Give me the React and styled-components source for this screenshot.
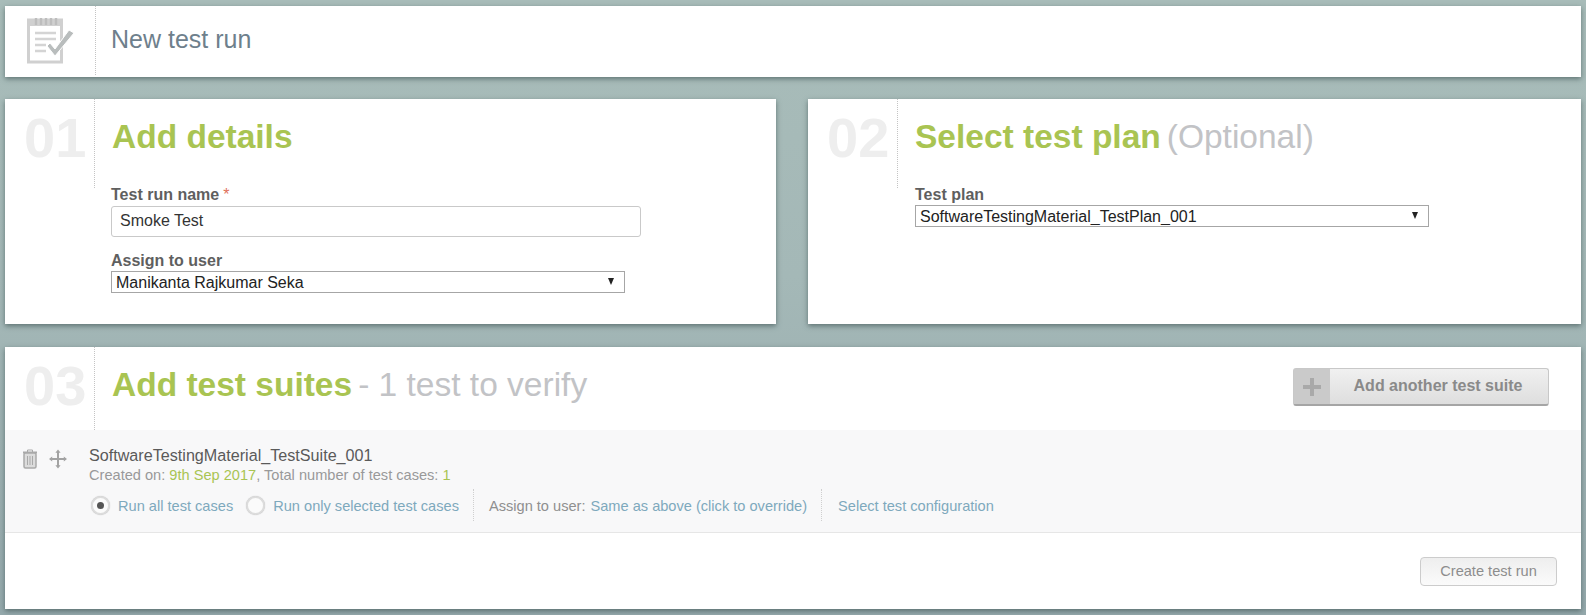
import React from "react";
import styled, { createGlobalStyle } from "styled-components";

const Global = createGlobalStyle`
  html, body { margin: 0; padding: 0; }
  body { font-family: "Liberation Sans", Arial, sans-serif; }
  * { box-sizing: border-box; }
`;

const Page = styled.div`
  width: 1586px;
  height: 615px;
  overflow: hidden;
  padding: 6px 5px 0 5px;
  background: linear-gradient(180deg, #a8bcb9 0%, #a4b8b7 45%, #95a9ac 100%);
  display: flex;
  flex-direction: column;
`;

const Panel = styled.section`
  background: #fff;
  box-shadow: 0 2px 5px rgba(50, 70, 70, 0.6);
`;

const Header = styled(Panel)`
  height: 71px;
  display: flex;
  align-items: stretch;
  flex: none;
`;

const HeaderIcon = styled.div`
  width: 91px;
  height: 69px;
  border-right: 1px dotted #c4c4c4;
  display: flex;
  align-items: center;
  padding-left: 22px;
`;

const PageTitle = styled.h1`
  margin: -4px 0 0;
  padding-left: 15px;
  align-self: center;
  font-size: 25px;
  font-weight: 400;
  color: #6e808c;
`;

const Columns = styled.div`
  margin-top: 22px;
  height: 225px;
  display: grid;
  grid-template-columns: 771px 773px;
  column-gap: 32px;
  flex: none;
`;

const StepCard = styled(Panel)`
  position: relative;
  padding: 0;
`;

const StepHead = styled.header`
  display: flex;
  align-items: flex-start;
  height: ${(p) => p.$h}px;
`;

const StepNumber = styled.div`
  width: 90px;
  height: 100%;
  border-right: 1px dotted #c4c4c4;
  padding: 6px 0 0 19px;
  font-size: 56px;
  line-height: 66px;
  font-weight: 700;
  color: #eeeeee;
  flex: none;
`;

const Title = styled.h2`
  margin: 0;
  padding: ${(p) => p.$top}px 0 0 17px;
  font-size: 33.5px;
  line-height: 38px;
  font-weight: 700;
  color: #a9c452;
  white-space: nowrap;
`;

const TitleNote = styled.span`
  font-weight: 400;
  color: #c2c3c6;
  margin-left: 6px;
`;

const Fields = styled.div`
  margin-top: -2px;
  padding-left: ${(p) => p.$left || 106}px;
  display: flex;
  flex-direction: column;
  align-items: flex-start;
`;

const Label = styled.label`
  font-size: 16px;
  line-height: 17px;
  font-weight: 700;
  color: #5f5f5f;
  display: block;
`;

const Required = styled.span`
  color: #e0705a;
  font-weight: 400;
  margin-left: 4px;
`;

const TextField = styled.input`
  display: block;
  width: 530px;
  height: 31px;
  margin: 3px 0 15px 0;
  padding: 0 8px 2px;
  border: 1px solid #c9c9c9;
  border-radius: 3px;
  font: 16px "Liberation Sans", Arial, sans-serif;
  color: #333;
  outline: none;
`;

const SelectWrap = styled.div`
  position: relative;
  width: ${(p) => p.$w}px;
  height: ${(p) => p.$h}px;
  margin-top: 2px;

  &::after {
    content: "";
    position: absolute;
    right: 11px;
    top: 7px;
    border-left: 3.5px solid transparent;
    border-right: 3.5px solid transparent;
    border-top: 7px solid #222;
    pointer-events: none;
  }
`;

const Select = styled.select`
  appearance: none;
  width: 100%;
  height: 100%;
  display: block;
  padding: 0 0 0 4px;
  border: 1px solid #a6a6a6;
  border-radius: 0;
  background: #fff;
  font: 16px "Liberation Sans", Arial, sans-serif;
  color: #222;
  outline: none;
`;

const SuitesCard = styled(Panel)`
  margin-top: 23px;
  height: 262px;
  flex: none;
  display: flex;
  flex-direction: column;
`;

const SuitesHead = styled(StepHead)`
  position: relative;
  flex: none;
`;

const AddButton = styled.button`
  position: absolute;
  left: 1288px;
  top: 21px;
  width: 256px;
  height: 38px;
  padding: 0;
  display: flex;
  align-items: stretch;
  border: 1px solid #c8c8c8;
  border-bottom: 2px solid #a5a5a5;
  border-radius: 3px;
  background: linear-gradient(180deg, #f0f0f0, #dedede);
  font: 700 16px "Liberation Sans", Arial, sans-serif;
  color: #8a8a8a;
`;

const AddIcon = styled.span`
  width: 36px;
  flex: none;
  display: flex;
  align-items: center;
  justify-content: center;
  background: #cacaca;
`;

const AddLabel = styled.span`
  flex: 1;
  align-self: center;
  text-align: center;
  margin: -2px 2px 0 0;
`;

const SuiteRow = styled.div`
  height: 103px;
  flex: none;
  display: flex;
  background: #f8f8f9;
  border-bottom: 1px solid #e6e6e6;
  padding: 19px 0 0 17px;
`;

const SuiteTools = styled.div`
  width: 67px;
  flex: none;
  display: flex;
  align-items: flex-start;
  gap: 11px;
`;

const SuiteBody = styled.div`
  display: flex;
  flex-direction: column;
`;

const SuiteName = styled.div`
  font-size: 16.15px;
  line-height: 17px;
  color: #5a5a5a;
  margin-top: -2px;
`;

const SuiteMeta = styled.div`
  font-size: 14.6px;
  line-height: 16px;
  color: #999;
  margin-top: 3px;
`;

const Accent = styled.span`
  color: #a9c452;
`;

const Options = styled.div`
  display: flex;
  align-items: center;
  margin-top: 6px;
  height: 32px;
  font-size: 14.6px;
  white-space: nowrap;
`;

const Radio = styled.span`
  width: 19px;
  height: 19px;
  margin-left: ${(p) => p.$ml}px;
  margin-right: 8px;
  border-radius: 50%;
  border: 2px solid #dcdcdc;
  background: #fbfbfb;
  box-shadow: 0 0 1px rgba(0, 0, 0, 0.25);
  display: flex;
  align-items: center;
  justify-content: center;
  flex: none;

  &::after {
    content: "";
    display: ${(p) => (p.$on ? "block" : "none")};
    width: 7px;
    height: 7px;
    border-radius: 50%;
    background: #555;
  }
`;

const OptionText = styled.span`
  padding-top: 2px;
`;

const LinkText = styled.a`
  color: #7ea9bd;
  text-decoration: none;
`;

const OptionGroup = styled.span`
  height: 100%;
  display: flex;
  align-items: center;
  border-left: 1px dotted #cfcfcf;
  margin-left: ${(p) => p.$ml}px;
  padding-left: ${(p) => p.$pl}px;
`;

const MutedText = styled.span`
  color: #8f8f8f;
  margin-right: 5px;
`;

const Footer = styled.footer`
  flex: 1;
  display: flex;
  justify-content: flex-end;
  align-items: flex-start;
  padding: 24px 24px 0 0;
`;

const CreateButton = styled.button`
  width: 137px;
  height: 29px;
  padding: 0 0 2px;
  border: 1px solid #cccccc;
  border-radius: 4px;
  background: linear-gradient(180deg, #eeeeee, #fbfbfb);
  font: 14.6px "Liberation Sans", Arial, sans-serif;
  color: #8d8d8d;
`;

const NotepadIcon = () => (
  <svg width="49" height="47" viewBox="0 0 49 47" fill="none" aria-hidden="true">
    <rect x="1.5" y="3" width="33" height="42" stroke="#d0d0d0" strokeWidth="3" fill="#fff" />
    <path d="M1 2h35v7H1z" fill="#d0d0d0" />
    <path d="M9 1v7M14 1v7M19 1v7M24 1v7M29 1v7" stroke="#bdbdbd" strokeWidth="2.4" />
    <path d="M8 16h21M8 22h21M8 28h11M8 34h11" stroke="#d4d4d4" strokeWidth="2.6" />
    <path d="M20 29l3-3 5 6L42 13l5 3-19 23z" fill="#b9bdbd" stroke="#fff" strokeWidth="1" />
  </svg>
);

const TrashIcon = () => (
  <svg width="16" height="20" viewBox="0 0 16 20" fill="none" stroke="#a9a9a9" aria-hidden="true">
    <path d="M1 3.5h14" strokeWidth="2" />
    <path d="M5.5 3V1h5v2" strokeWidth="1" />
    <rect x="2" y="4" width="12" height="15" rx="1.5" strokeWidth="1.5" fill="#dcdcdc" />
    <path d="M5.5 7v9M8 7v9M10.5 7v9" strokeWidth="1" />
  </svg>
);

const MoveIcon = () => (
  <svg width="18" height="20" viewBox="0 0 18 20" fill="#a3a3a3" aria-hidden="true">
    <path d="M8 3h2v14H8z" />
    <path d="M1.5 9h15v2h-15z" />
    <path d="M9 .5L11.6 3.8H6.4zM9 19.5l-2.6-3.3h5.2zM0 10l3.2-2.6v5.2zM18 10l-3.2-2.6v5.2z" />
  </svg>
);

const PlusIcon = () => (
  <svg width="20" height="20" viewBox="0 0 20 20" fill="#a9a9a9" aria-hidden="true">
    <path d="M8 1h4v7h7v4h-7v7H8v-7H1V8h7z" />
  </svg>
);

export default function App() {
  return (
    <Page>
      <Global />
      <Header>
        <HeaderIcon>
          <NotepadIcon />
        </HeaderIcon>
        <PageTitle>New test run</PageTitle>
      </Header>

      <Columns>
        <StepCard>
          <StepHead $h={89}>
            <StepNumber>01</StepNumber>
            <Title $top={19}>Add details</Title>
          </StepHead>
          <Fields>
            <Label>
              Test run name<Required>*</Required>
            </Label>
            <TextField defaultValue="Smoke Test" />
            <Label>Assign to user</Label>
            <SelectWrap $w={514} $h={22}>
              <Select defaultValue="m">
                <option value="m">Manikanta Rajkumar Seka</option>
              </Select>
            </SelectWrap>
          </Fields>
        </StepCard>

        <StepCard>
          <StepHead $h={89}>
            <StepNumber>02</StepNumber>
            <Title $top={19}>
              Select test plan<TitleNote>(Optional)</TitleNote>
            </Title>
          </StepHead>
          <Fields $left={107}>
            <Label>Test plan</Label>
            <SelectWrap $w={514} $h={22}>
              <Select defaultValue="p">
                <option value="p">SoftwareTestingMaterial_TestPlan_001</option>
              </Select>
            </SelectWrap>
          </Fields>
        </StepCard>
      </Columns>

      <SuitesCard>
        <SuitesHead $h={83}>
          <StepNumber>03</StepNumber>
          <Title $top={19}>
            Add test suites<TitleNote>- 1 test to verify</TitleNote>
          </Title>
          <AddButton>
            <AddIcon>
              <PlusIcon />
            </AddIcon>
            <AddLabel>Add another test suite</AddLabel>
          </AddButton>
        </SuitesHead>

        <SuiteRow>
          <SuiteTools>
            <TrashIcon />
            <MoveIcon />
          </SuiteTools>
          <SuiteBody>
            <SuiteName>SoftwareTestingMaterial_TestSuite_001</SuiteName>
            <SuiteMeta>
              Created on: <Accent>9th Sep 2017</Accent>, Total number of test cases: <Accent>1</Accent>
            </SuiteMeta>
            <Options>
              <Radio $on $ml={2} />
              <OptionText>
                <LinkText>Run all test cases</LinkText>
              </OptionText>
              <Radio $ml={13} />
              <OptionText>
                <LinkText>Run only selected test cases</LinkText>
              </OptionText>
              <OptionGroup $ml={14} $pl={15}>
                <OptionText>
                  <MutedText>Assign to user:</MutedText>
                  <LinkText>Same as above (click to override)</LinkText>
                </OptionText>
              </OptionGroup>
              <OptionGroup $ml={14} $pl={16}>
                <OptionText>
                  <LinkText>Select test configuration</LinkText>
                </OptionText>
              </OptionGroup>
            </Options>
          </SuiteBody>
        </SuiteRow>

        <Footer>
          <CreateButton>Create test run</CreateButton>
        </Footer>
      </SuitesCard>
    </Page>
  );
}
